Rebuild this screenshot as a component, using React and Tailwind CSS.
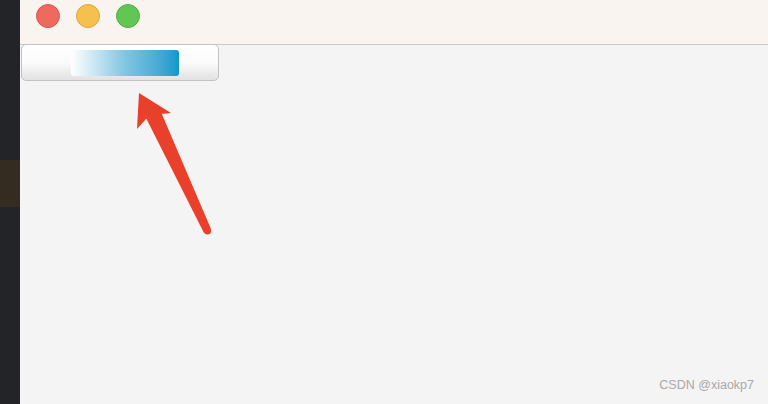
export default function App() {
  return (
    <div className="relative flex w-[768px] h-[404px] overflow-hidden bg-[#f4f4f4] font-['Liberation_Sans',sans-serif]">
      {/* left dark strip */}
      <div className="flex flex-col w-[20px] h-full bg-[#232427]">
        <div className="h-[160px]" />
        <div className="h-[47px] bg-[#342b21]" />
      </div>

      {/* window */}
      <div className="flex-1 flex flex-col bg-[#f4f4f4] rounded-tl-[7px] overflow-hidden">
        <div className="h-[45px] flex items-start gap-[16px] pl-[16px] pt-[4px] bg-[#f9f4f0] border-b border-[#c9c9c9]">
          <div className="w-[24px] h-[24px] rounded-full bg-[#ee6a5f] border border-[#d9574d]" />
          <div className="w-[24px] h-[24px] rounded-full bg-[#f6c04f] border border-[#dea73b]" />
          <div className="w-[24px] h-[24px] rounded-full bg-[#62c655] border border-[#52ad47]" />
        </div>

        <div className="flex-1 flex flex-col">
          <div className="ml-[1px] w-[198px] h-[37px] -mt-[1px] rounded-[5px] border border-[#c2c2c2] bg-gradient-to-b from-[#ffffff] via-[#fbfbfb] to-[#e2e2e2] flex items-center pl-[49px]">
            <div className="w-[108px] h-[26px] rounded-[3px] bg-gradient-to-r from-[#ffffff] via-[#80c6e2] to-[#0898cc]" />
          </div>
          <div className="flex-1" />
          <div className="flex justify-end pr-[14px] pb-[9px] text-[12.5px] text-[#a9a9a9]">
            CSDN @xiaokp7
          </div>
        </div>
      </div>

      {/* red annotation arrow */}
      <svg className="absolute left-0 top-0" width="768" height="404" viewBox="0 0 768 404">
        <polygon points="139,93 171,113 161,114 146,119 137,129" fill="#e8402a" />
        <polygon points="146,118 161,112 211,229 204,233" fill="#e8402a" />
        <circle cx="207.5" cy="231" r="3.5" fill="#e8402a" />
      </svg>
    </div>
  );
}
